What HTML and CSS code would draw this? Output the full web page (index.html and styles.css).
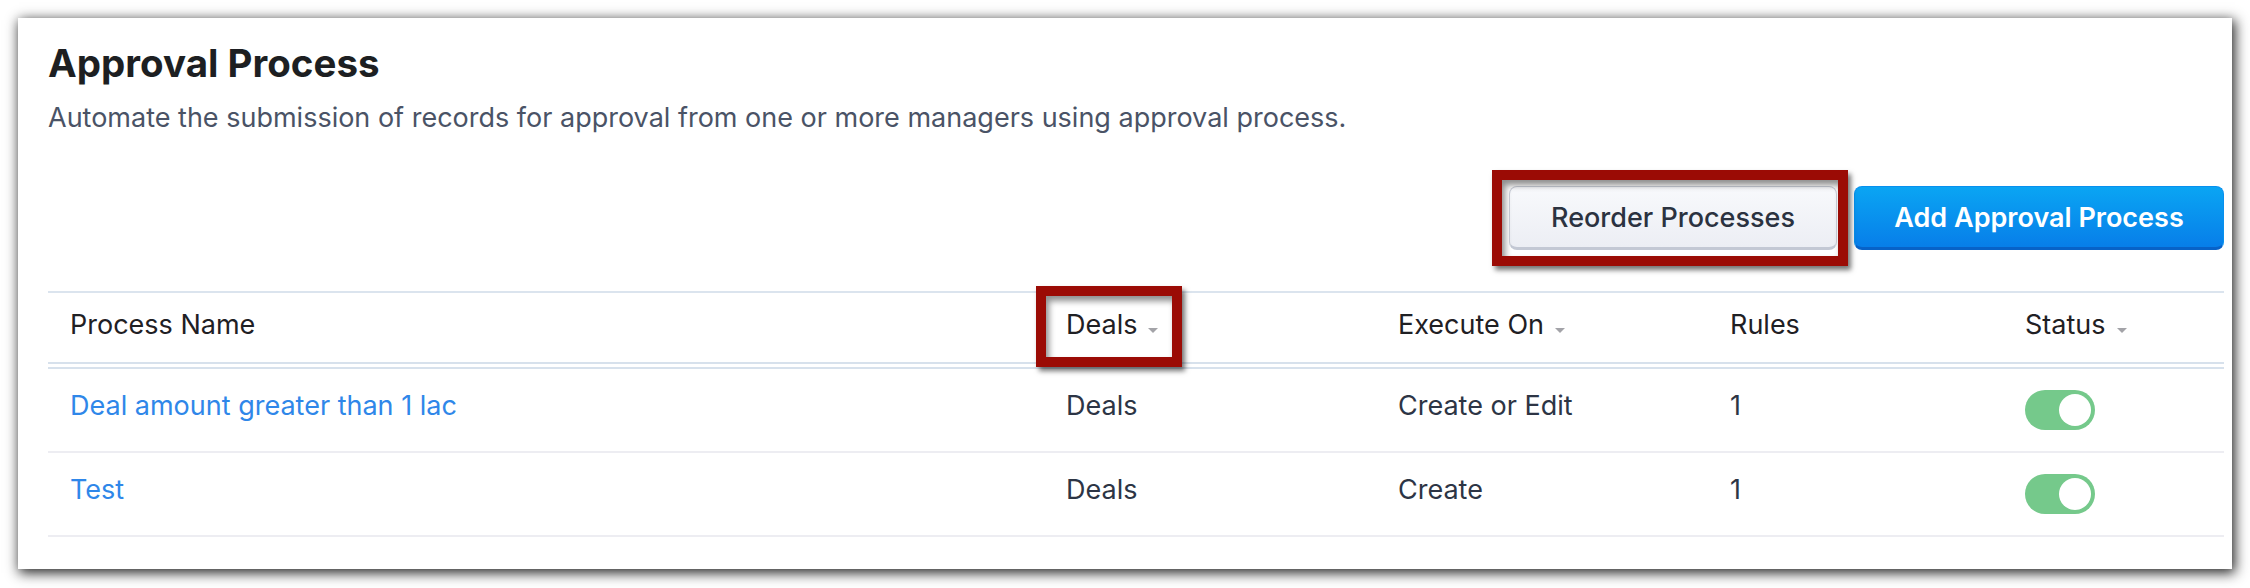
FILE: index.html
```html
<!DOCTYPE html>
<html lang="en">
<head>
<meta charset="utf-8">
<title>Approval Process</title>
<link rel="stylesheet" href="styles.css">
</head>
<body>
<div class="card">
  <h1 class="title">Approval Process</h1>
  <p class="subtitle">Automate the submission of records for approval from one or more managers using approval process.</p>
  <div class="actions">
    <div class="annotated">
      <button class="btn btn-secondary">Reorder Processes</button>
      <span class="mark mark-btn"></span>
    </div>
    <button class="btn btn-primary">Add Approval Process</button>
  </div>
  <div class="table">
    <div class="row head">
      <div class="cell">Process Name</div>
      <div class="cell annotated">Deals<span class="caret"></span><span class="mark mark-col"></span></div>
      <div class="cell">Execute On<span class="caret"></span></div>
      <div class="cell">Rules</div>
      <div class="cell">Status<span class="caret"></span></div>
    </div>
    <div class="body">
      <div class="row">
        <div class="cell link">Deal amount greater than 1 lac</div>
        <div class="cell">Deals</div>
        <div class="cell">Create or Edit</div>
        <div class="cell">1</div>
        <div class="cell toggle-cell"><span class="toggle"><span class="knob"></span></span></div>
      </div>
      <div class="row">
        <div class="cell link">Test</div>
        <div class="cell">Deals</div>
        <div class="cell">Create</div>
        <div class="cell">1</div>
        <div class="cell toggle-cell"><span class="toggle"><span class="knob"></span></span></div>
      </div>
    </div>
  </div>
</div>
</body>
</html>
```
FILE: styles.css
```css
* { box-sizing: border-box; }
html, body { margin: 0; padding: 0; background: #ffffff; }
body {
  font-family: "Inter", "Noto Sans", sans-serif;
  padding: 18px 0 19px 0;
  min-height: 588px;
}

.card {
  margin: 0 18px;
  height: 551px;
  background: #ffffff;
  padding: 22px 8px 32px 30px;
  box-shadow: 2px 3px 12px 1px rgba(0, 0, 0, 0.85);
}

.title {
  margin: 0;
  font-size: 38.5px;
  line-height: 46px;
  font-weight: 700;
  color: #1d1f22;
  letter-spacing: 0;
}

.subtitle {
  margin: 16px 0 0 0;
  font-size: 27px;
  line-height: 32px;
  color: #4a5366;
}

.actions {
  margin-top: 52px;
  display: flex;
  justify-content: flex-end;
  gap: 17px;
}

.annotated { position: relative; }

.btn {
  height: 64px;
  border-radius: 8px;
  font-family: "Inter", "Noto Sans", sans-serif;
  font-size: 27px;
  display: inline-flex;
  align-items: center;
  justify-content: center;
  cursor: pointer;
}

.btn-secondary {
  width: 328px;
  font-weight: 500;
  color: #2b3240;
  background: linear-gradient(#f8f9fc, #eceef4);
  border: 1px solid #cbcfd9;
  border-bottom: 3px solid #c3c8d4;
}

.btn-primary {
  width: 370px;
  font-weight: 600;
  color: #ffffff;
  background: linear-gradient(#0aa5f3, #077ee9);
  border: 1px solid #0890ee;
  border-bottom: 3px solid #0762c8;
}

.mark {
  position: absolute;
  border: 10px solid #9b0b05;
  box-shadow: 3px 4px 5px rgba(0, 0, 0, 0.55), inset 3px 5px 6px rgba(0, 0, 0, 0.45);
  pointer-events: none;
}

.mark-btn {
  left: -17px;
  top: -16px;
  width: 356px;
  height: 96px;
}

.mark-col {
  left: -8px;
  top: -23px;
  width: 146px;
  height: 81px;
}

.table { margin-top: 41px; }

.row {
  display: grid;
  grid-template-columns: 996px 332px 332px 295px 221px;
  align-items: center;
}

.cell {
  padding-left: 22px;
  font-size: 27px;
  line-height: 32px;
  white-space: nowrap;
}

.head {
  border-top: 2px solid #dbe4ee;
  border-bottom: 2px solid #d7e1ec;
  padding: 16px 0 21px 0;
  color: #1f2024;
}

.caret {
  display: inline-block;
  width: 0;
  height: 0;
  margin-left: 11px;
  border-left: 5px solid transparent;
  border-right: 5px solid transparent;
  border-top: 5px solid #a3a3a8;
  vertical-align: 1px;
}

.body {
  margin-top: 3px;
  border-top: 2px solid #d7e1ec;
}

.body .row {
  height: 84px;
  border-bottom: 2px solid #ededf2;
  color: #2d3545;
}

.body .cell { padding-bottom: 8px; }

.link { color: #2f87e9; }

.body .toggle-cell { padding-bottom: 0; display: flex; align-items: center; }

.toggle {
  width: 70px;
  height: 40px;
  border-radius: 20px;
  background: #75c98b;
  display: flex;
  justify-content: flex-end;
  align-items: center;
  padding-right: 4px;
}

.knob {
  width: 32px;
  height: 32px;
  border-radius: 50%;
  background: #ffffff;
}
```
